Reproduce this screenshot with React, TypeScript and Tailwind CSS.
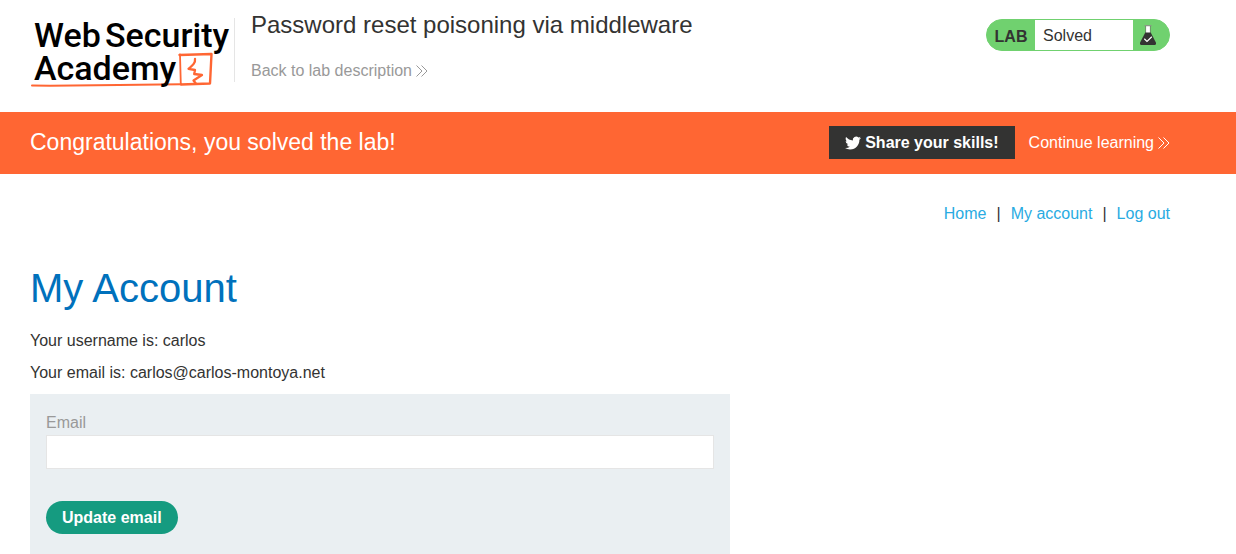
import React from 'react';

function AcademyLogo() {
  return (
    <a href="#academy" aria-label="Web Security Academy" className="block h-[72px] w-[204px] shrink-0">
      <svg viewBox="0 0 204 72" className="block h-full w-full overflow-visible" fill="none">
        <g stroke="#ff6633" strokeLinecap="round" strokeLinejoin="round">
          <path d="M149.500 37 L181.500 36 L180 65.500 L151 66.500" strokeWidth="2.4" />
          <path d="M150 36.500 L150.800 66" strokeWidth="1.8" />
          <path d="M151 66.300 C110 66.800 60 67.400 20 67.800 L2 67.600" strokeWidth="2" />
          <path d="M165 41 C165.500 44.500 163.500 46.500 158.500 50.800 L165 52 L164.200 56 L172 57 L163.500 62.500 L166 65.800" strokeWidth="2.3" />
        </g>
        <text fill="#000" fontFamily="Roboto, sans-serif" fontSize="34" fontWeight="500">
          <tspan x="4" y="29">Web</tspan>
          <tspan x="75" y="29">Security</tspan>
          <tspan x="4" y="62">Academy</tspan>
        </text>
      </svg>
    </a>
  );
}

function DoubleChevron() {
  return (
    <svg viewBox="0 0 12 12" className="h-3 w-3 shrink-0" fill="none" stroke="currentColor" strokeWidth="1" aria-hidden="true">
      <path d="M0.500 0.500 L6 6 L0.500 11.500 M5.500 0.500 L11 6 L5.500 11.500" />
    </svg>
  );
}

function Flask() {
  return (
    <svg viewBox="0 0 16 20" className="h-5 w-4" fill="none" aria-hidden="true">
      <path d="M6 1 H10 V8 H6 Z" fill="#fff" />
      <path d="M4.500 0.600 H11.500" stroke="#8a9a86" strokeWidth="1.2" />
      <path d="M5.600 1 V8 M10.400 1 V8" stroke="#6f8a6b" strokeWidth="0.9" />
      <path d="M5.300 7.500 H10.700 L15.900 17.500 Q16.500 20 14.500 20 H1.500 Q-0.500 20 0.100 17.500 Z" fill="#333332" />
      <path d="M4.300 13.800 L7 16.400 L11.800 11.800" stroke="#fff" strokeWidth="1.2" />
    </svg>
  );
}

function TwitterBird() {
  return (
    <svg viewBox="0 0 24 24" className="h-4 w-4" fill="currentColor" aria-hidden="true">
      <path d="M23.953 4.570a10 10 0 0 1-2.825.775 4.958 4.958 0 0 0 2.163-2.723c-.951.555-2.005.959-3.127 1.184a4.920 4.920 0 0 0-8.384 4.482C7.690 8.095 4.067 6.130 1.640 3.162a4.822 4.822 0 0 0-.666 2.475c0 1.710.870 3.213 2.188 4.096a4.904 4.904 0 0 1-2.228-.616v.060a4.923 4.923 0 0 0 3.946 4.827 4.996 4.996 0 0 1-2.212.085 4.936 4.936 0 0 0 4.604 3.417 9.867 9.867 0 0 1-6.102 2.105c-.390 0-.779-.023-1.170-.067a13.995 13.995 0 0 0 7.557 2.209c9.053 0 13.998-7.496 13.998-13.985 0-.210 0-.420-.015-.630A9.935 9.935 0 0 0 24 4.590z" />
    </svg>
  );
}

function LabStatus() {
  return (
    <div className="flex h-8 shrink-0 overflow-hidden rounded-full border border-[#70d16f] bg-[#70d16f]">
      <span className="flex w-12 items-center justify-center pt-1 font-bold">LAB</span>
      <span className="flex w-[98px] items-center bg-white px-2 pt-[2px]">Solved</span>
      <span className="flex w-9 items-center pl-[7px]">
        <Flask />
      </span>
    </div>
  );
}

export default function App() {
  return (
    <div className="bg-white font-['Liberation_Sans',Arial,sans-serif] text-base text-[#333332]">
      <header className="flex max-w-[1200px] items-start justify-between px-[30px] pt-[18px] pb-[22px]">
        <div className="flex items-start">
          <AcademyLogo />
          <div className="flex h-16 flex-col border-l border-[#e5e5e5] pl-4">
            <h1 className="-mt-2 text-2xl leading-[30px]">Password reset poisoning via middleware</h1>
            <a href="#description" className="mt-[19px] flex items-center gap-1 leading-6 text-[#999999]">
              Back to lab description
              <DoubleChevron />
            </a>
          </div>
        </div>
        <div className="pt-px">
          <LabStatus />
        </div>
      </header>

      <section className="bg-[#ff6633] text-white">
        <div className="flex max-w-[1200px] items-center justify-between px-[30px] pt-[14px] pb-[15px]">
          <p className="text-[23px] leading-[33px]">Congratulations, you solved the lab!</p>
          <div className="flex items-center gap-[14px]">
            <button type="button" className="flex h-[33px] items-center gap-1 bg-[#333332] px-4 font-bold">
              <TwitterBird />
              Share your skills!
            </button>
            <a href="#learning" className="flex items-center gap-1">
              Continue learning
              <DoubleChevron />
            </a>
          </div>
        </div>
      </section>

      <main className="max-w-[1200px] px-[30px]">
        <nav className="flex justify-end gap-[10px] pt-7 leading-6">
          <a href="#home" className="text-[#29abe2]">Home</a>
          <span>|</span>
          <a href="#account" className="text-[#29abe2]">My account</a>
          <span>|</span>
          <a href="#logout" className="text-[#29abe2]">Log out</a>
        </nav>

        <h2 className="pt-[38px] text-[40px] leading-[48px] text-[#0071bc]">My Account</h2>
        <p className="pt-[17px] leading-6">Your username is: carlos</p>
        <p className="pt-2 leading-6">Your email is: carlos@carlos-montoya.net</p>

        <form className="mt-[9px] max-w-[700px] bg-[#eaeff2] px-4 pt-4 pb-5" onSubmit={(e) => e.preventDefault()}>
          <label htmlFor="email" className="block leading-[25px] text-[#999999]">Email</label>
          <input id="email" type="email" className="block h-[34px] w-full border border-[#e5e5e5] bg-white px-2 outline-none" />
          <button type="submit" className="mt-8 h-[33px] rounded-full bg-[#159b80] px-4 font-bold text-white">
            Update email
          </button>
        </form>
      </main>
    </div>
  );
}
